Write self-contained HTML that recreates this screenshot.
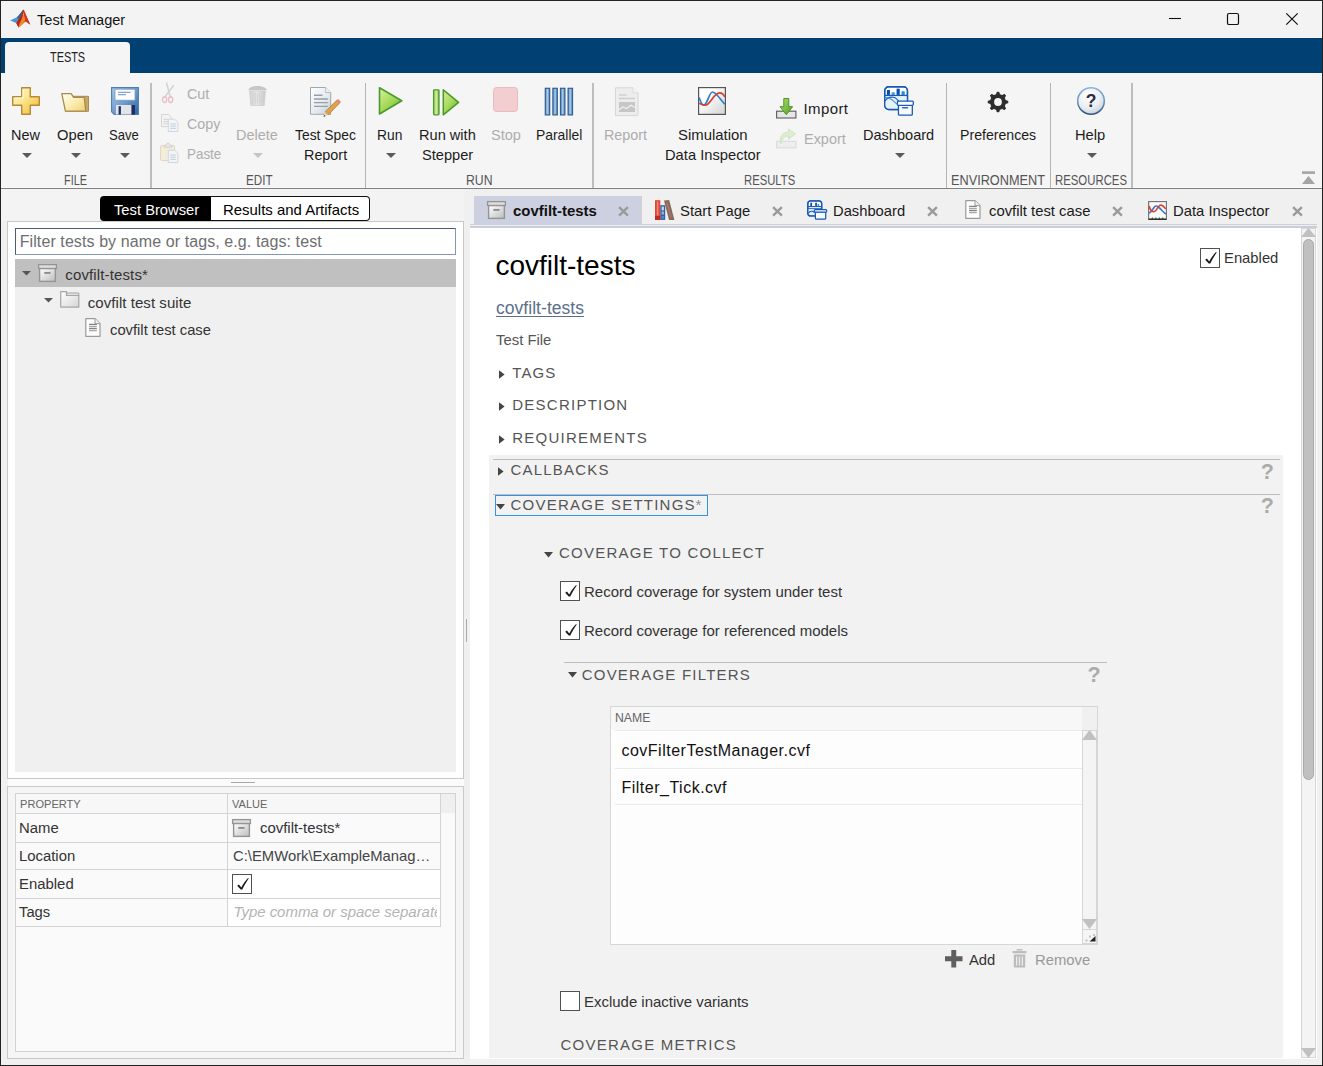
<!DOCTYPE html>
<html lang="en"><head><meta charset="utf-8"><title>Test Manager</title>
<style>
html,body{margin:0;padding:0;}
body{width:1323px;height:1066px;position:relative;overflow:hidden;background:#f0f0f0;font-family:"Liberation Sans",sans-serif;}
.t{position:absolute;white-space:pre;transform-origin:0 0;}
svg{display:block;overflow:visible;}
</style></head>
<body>
<div class="titlebar" style="position:absolute;left:0px;top:0px;width:1323px;height:38px;background:#f3f3f3;"></div>
<svg style="position:absolute;left:10px;top:9px;" width="21" height="20" viewBox="0 0 21 20"><path d="M13.400 .8L20.300 15.600L15.600 12.400L8.600 18.600L6.300 14L11 7z" fill="#c8321f"/><path d="M.2 11.500L6.800 8.300L8.200 10.600L6.300 14z" fill="#3f97dc"/><path d="M6.800 8.300C9.200 6.200 11.200 2.800 12.900 .9L13.400 1.200L11 7.600L8.200 10.600z" fill="#34618f"/><path d="M12.900 .9C13.300 .5 13.700 .6 14 1.300L13.600 4L12 9L9 15L8.600 18.600L6.300 14L8.200 10.600L11 7.600z" fill="#b3261c"/><path d="M13.500 2.500C13.900 5 14.600 7.800 15.400 10L14.600 12.700C13 14 11 17.200 8.600 18.600C8.700 16.500 9.500 14.500 11 12C12.200 9.500 13 6 13.500 2.500z" fill="#ef8a2a"/><path d="M14 1.300C15.400 3.500 17.500 10.500 20.300 15.600C18.400 14.400 16.800 12.700 15.600 12.400C15.200 12.300 14.900 12.400 14.600 12.700L15.400 10C14.600 7.800 13.900 5 13.500 2.500z" fill="#cf3a24"/><path d="M13.450 3.600l.5 2.100-.8 0z" fill="#ffd23a"/></svg>
<span class="t" style="left:37.40px;top:12.00px;font-size:15.2px;line-height:15.2px;color:#141414;transform:scaleX(0.9587);">Test Manager</span>
<svg style="position:absolute;left:1160px;top:5px;" width="150" height="28" viewBox="0 0 150 28"><path d="M9 13.5h12" stroke="#111" stroke-width="1.1" fill="none"/><rect x="67.5" y="8.5" width="11" height="11" rx="1.6" fill="none" stroke="#111" stroke-width="1.2"/><path d="M126.3 8.3l11.4 11.4M137.7 8.3l-11.4 11.4" stroke="#111" stroke-width="1.2" fill="none"/></svg>
<div class="tabbar" style="position:absolute;left:0px;top:38px;width:1323px;height:35px;background:#004073;"></div>
<div style="position:absolute;left:5px;top:42px;width:125px;height:31px;background:#f5f5f5;border-radius:4px 4px 0 0;"></div>
<span class="t" style="left:50.00px;top:50.00px;font-size:14px;line-height:14px;color:#222;transform:scaleX(0.7783);">TESTS</span>
<div class="toolstrip" style="position:absolute;left:0px;top:73px;width:1323px;height:115px;background:#f5f5f5;"></div>
<div style="position:absolute;left:0px;top:187px;width:1323px;height:1px;background:#fafafa;"></div>
<div style="position:absolute;left:0px;top:188px;width:1323px;height:1px;background:#808080;"></div>
<div style="position:absolute;left:150px;top:83px;width:2px;height:105px;background:#bdbdbd;"></div>
<div style="position:absolute;left:365px;top:83px;width:1px;height:105px;background:#b4b4b4;"></div>
<div style="position:absolute;left:592px;top:83px;width:2px;height:105px;background:#bdbdbd;"></div>
<div style="position:absolute;left:946px;top:83px;width:1px;height:105px;background:#b4b4b4;"></div>
<div style="position:absolute;left:1050px;top:83px;width:1px;height:105px;background:#b4b4b4;"></div>
<div style="position:absolute;left:1131px;top:83px;width:2px;height:105px;background:#bdbdbd;"></div>
<svg style="position:absolute;left:12px;top:87px;" width="28" height="28" viewBox="0 0 28 28"><defs><linearGradient id="g1" x1="0" y1="0" x2="1" y2="1"><stop offset="0" stop-color="#fffbe2"/><stop offset=".45" stop-color="#fbe58c"/><stop offset="1" stop-color="#eeb42c"/></linearGradient></defs><path d="M9.7 .7h8.6v9h9v8.6h-9v9H9.700v-9h-9V9.700h9z" fill="url(#g1)" stroke="#b98a34" stroke-width="1.4" stroke-linejoin="round"/><path d="M11 2.200v8.800h-8.800" fill="none" stroke="#fffef0" stroke-width="1.1" opacity=".9"/></svg>
<span class="t" style="left:11.40px;top:127.00px;font-size:15px;line-height:15px;color:#1c1c1c;transform:scaleX(0.9635);">New</span>
<svg style="position:absolute;left:22.0px;top:153px;" width="10" height="5" viewBox="0 0 10 5"><path d="M0 0h10l-5.0 5z" fill="#5a5a5a"/></svg>
<svg style="position:absolute;left:61px;top:92px;" width="29" height="20" viewBox="0 0 29 20"><defs><linearGradient id="g2" x1="0" y1="0" x2="1" y2="1"><stop offset="0" stop-color="#fffef4"/><stop offset=".5" stop-color="#fbeeb4"/><stop offset="1" stop-color="#efd071"/></linearGradient></defs><path d="M12 4.300h15.500v15H5z" fill="#c9a666" stroke="#a88a55" stroke-width="1"/><path d="M.8 1.600h9.400l2.400 3.800h10.600l1.600 13.800H4.400z" fill="url(#g2)" stroke="#a98b52" stroke-width="1.3" stroke-linejoin="round"/></svg>
<span class="t" style="left:56.70px;top:127.00px;font-size:15px;line-height:15px;color:#1c1c1c;transform:scaleX(0.9809);">Open</span>
<svg style="position:absolute;left:71.0px;top:153px;" width="10" height="5" viewBox="0 0 10 5"><path d="M0 0h10l-5.0 5z" fill="#5a5a5a"/></svg>
<svg style="position:absolute;left:111px;top:87px;" width="28" height="28" viewBox="0 0 28 28"><defs><linearGradient id="g3" x1="0" y1="0" x2="1" y2="1"><stop offset="0" stop-color="#a9c9ea"/><stop offset=".5" stop-color="#6f9fd0"/><stop offset="1" stop-color="#2f5f96"/></linearGradient></defs><path d="M.6 .6h26.800v26.800H3.200L.6 24.800z" fill="url(#g3)" stroke="#4d7db4" stroke-width="1.1"/><rect x="4" y="2.200" width="20" height="11" fill="#fdfdfe" stroke="#7c9cc2" stroke-width=".8"/><path d="M7 5.300h12.500M7 7.700h8" stroke="#86a5c9" stroke-width="1.2"/><rect x="4.600" y="18" width="19.400" height="9.600" fill="#1c2c66"/><rect x="4.600" y="18" width="15.800" height="9.600" fill="#e3e4e8"/><rect x="7.600" y="19.200" width="2.300" height="8.400" fill="#1c2c66"/></svg>
<span class="t" style="left:109.00px;top:127.00px;font-size:15px;line-height:15px;color:#1c1c1c;transform:scaleX(0.8743);">Save</span>
<svg style="position:absolute;left:119.7px;top:153px;" width="10" height="5" viewBox="0 0 10 5"><path d="M0 0h10l-5.0 5z" fill="#5a5a5a"/></svg>
<svg style="opacity:0.72;position:absolute;left:161px;top:83px;" width="14" height="21" viewBox="0 0 14 21"><path d="M5.600 .3L9.400 14M12.400 2.800L3.800 14" stroke="#c6c6c6" stroke-width="1.500" fill="none" stroke-linecap="round"/><ellipse cx="3.600" cy="16.600" rx="2.100" ry="2.900" fill="none" stroke="#e7a9b2" stroke-width="1.400"/><ellipse cx="9.600" cy="16.600" rx="2.100" ry="2.900" fill="none" stroke="#e7a9b2" stroke-width="1.400"/></svg>
<span class="t" style="left:186.70px;top:86.00px;font-size:15px;line-height:15px;color:#adadad;transform:scaleX(0.9571);">Cut</span>
<svg style="opacity:0.72;position:absolute;left:161px;top:114px;" width="18" height="18" viewBox="0 0 18 18"><path d="M0.5 0.5h6.8l3.2 3.2v9.0h-10z" fill="#f3f3f4" stroke="#c8c8cc" stroke-width="1"/><path d="M2.5 5.300000000000001h6" stroke="#c8c8cc" stroke-width="1"/><path d="M2.5 7.500000000000001h6" stroke="#c8c8cc" stroke-width="1"/><path d="M2.5 9.700000000000001h6" stroke="#c8c8cc" stroke-width="1"/><path d="M7.3 5.2h6.3999999999999995l3.2 3.2v9.100000000000001h-9.6z" fill="#f2f5f9" stroke="#c2cbd8" stroke-width="1"/><path d="M9.3 10.0h5.6" stroke="#b4c0d0" stroke-width="1"/><path d="M9.3 12.2h5.6" stroke="#b4c0d0" stroke-width="1"/><path d="M9.3 14.399999999999999h5.6" stroke="#b4c0d0" stroke-width="1"/></svg>
<span class="t" style="left:186.70px;top:116.00px;font-size:15px;line-height:15px;color:#adadad;transform:scaleX(0.9543);">Copy</span>
<svg style="opacity:0.72;position:absolute;left:160px;top:143px;" width="19" height="20" viewBox="0 0 19 20"><rect x=".6" y="2.600" width="14" height="15" rx="1.200" fill="#f3ead0" stroke="#d9ceb2" stroke-width="1"/><path d="M4 4.200V2.200h2L7 .5h2l1 1.700h2v2z" fill="#e2e2e2" stroke="#c4c4c4" stroke-width=".9"/><path d="M8.3 7.2h6.3999999999999995l3.2 3.2v9.100000000000001h-9.6z" fill="#f2f5f9" stroke="#c2cbd8" stroke-width="1"/><path d="M10.3 12.0h5.6" stroke="#b4c0d0" stroke-width="1"/><path d="M10.3 14.2h5.6" stroke="#b4c0d0" stroke-width="1"/><path d="M10.3 16.4h5.6" stroke="#b4c0d0" stroke-width="1"/></svg>
<span class="t" style="left:186.70px;top:146.00px;font-size:15px;line-height:15px;color:#adadad;transform:scaleX(0.8932);">Paste</span>
<svg style="position:absolute;left:247px;top:85px;" width="21" height="21" viewBox="0 0 21 21"><defs><linearGradient id="g4" x1="0" y1="0" x2="1" y2="0"><stop offset="0" stop-color="#d2d2d2"/><stop offset=".5" stop-color="#e6e6e6"/><stop offset="1" stop-color="#c8c8c8"/></linearGradient></defs><path d="M1.200 5.200C1.800 2.800 5 1 10.500 1S19.200 2.800 19.800 5.200z" fill="#c6c6c6"/><path d="M2.600 6h15.800l-1.200 14.500H3.800z" fill="url(#g4)" stroke="#cfcfcf" stroke-width=".8"/><path d="M6 8v10.500M8.300 8v10.500M10.500 8v10.500M12.700 8v10.500M15 8v10.500" stroke="#d0d0d0" stroke-width=".9"/></svg>
<span class="t" style="left:236.30px;top:127.00px;font-size:15px;line-height:15px;color:#adadad;transform:scaleX(0.9608);">Delete</span>
<svg style="position:absolute;left:253.0px;top:153px;" width="10" height="5" viewBox="0 0 10 5"><path d="M0 0h10l-5.0 5z" fill="#c4c4c4"/></svg>
<svg style="position:absolute;left:309px;top:86px;" width="32" height="32" viewBox="0 0 32 32"><defs><linearGradient id="g5" x1="0" y1="0" x2="1" y2="1"><stop offset="0" stop-color="#fdfefe"/><stop offset=".6" stop-color="#e3eaf1"/><stop offset="1" stop-color="#bccad8"/></linearGradient></defs><path d="M1.500 1.500h15.200l5 5v21.800H1.500z" fill="url(#g5)" stroke="#a3a7ab" stroke-width="1"/><path d="M16.700 1.500v5h5" fill="#f4f6f8" stroke="#b0b4b8" stroke-width=".9"/><path d="M5 9.200h8.500M5 13h13.800M5 16.600h13.800M5 20.400h13.800" stroke="#9a9da1" stroke-width="1.400"/><path d="M27.600 14.300l3 3L19 29l-3-3z" fill="#dfa24c" stroke="#b57a2e" stroke-width=".7"/><path d="M27.600 14.300l1.500-1.400 3 3-1.500 1.400z" fill="#e87f8c"/><path d="M16 26l3 3-4.600 1.600z" fill="#e9d3a6"/><path d="M15.300 29l1.300 1.200-2.200.6z" fill="#333"/></svg>
<span class="t" style="left:294.50px;top:127.00px;font-size:15px;line-height:15px;color:#1c1c1c;transform:scaleX(0.9241);">Test Spec</span>
<span class="t" style="left:303.60px;top:147.00px;font-size:15px;line-height:15px;color:#1c1c1c;transform:scaleX(0.9578);">Report</span>
<svg style="position:absolute;left:378px;top:86px;" width="26" height="30" viewBox="0 0 26 30"><defs><linearGradient id="g6" x1="0" y1="0" x2=".8" y2="1"><stop offset="0" stop-color="#d6f09a"/><stop offset=".55" stop-color="#a6da5a"/><stop offset="1" stop-color="#6cb637"/></linearGradient></defs><path d="M1.500 1.800L23.800 14.800L1.500 28z" fill="url(#g6)" stroke="#4c9a2e" stroke-width="1.600" stroke-linejoin="round"/></svg>
<span class="t" style="left:376.70px;top:127.00px;font-size:15px;line-height:15px;color:#1c1c1c;transform:scaleX(0.9200);">Run</span>
<svg style="position:absolute;left:385.8px;top:153px;" width="10" height="5" viewBox="0 0 10 5"><path d="M0 0h10l-5.0 5z" fill="#5a5a5a"/></svg>
<svg style="position:absolute;left:432px;top:88px;" width="29" height="28" viewBox="0 0 29 28"><defs><linearGradient id="g7" x1="0" y1="0" x2=".8" y2="1"><stop offset="0" stop-color="#d6f09a"/><stop offset=".55" stop-color="#a6da5a"/><stop offset="1" stop-color="#6cb637"/></linearGradient><linearGradient id="g8" x1="0" y1="0" x2="1" y2="0"><stop offset="0" stop-color="#8fcc4c"/><stop offset=".5" stop-color="#d4ef9c"/><stop offset="1" stop-color="#7dbf3f"/></linearGradient></defs><rect x="1.600" y="1.800" width="5.400" height="25" rx=".8" fill="url(#g8)" stroke="#4c9a2e" stroke-width="1.300"/><path d="M11.300 1.800L26.600 14.300L11.300 26.800z" fill="url(#g7)" stroke="#4c9a2e" stroke-width="1.500" stroke-linejoin="round"/></svg>
<span class="t" style="left:419.00px;top:127.00px;font-size:15px;line-height:15px;color:#1c1c1c;transform:scaleX(0.9726);">Run with</span>
<span class="t" style="left:421.70px;top:147.00px;font-size:15px;line-height:15px;color:#1c1c1c;transform:scaleX(0.9752);">Stepper</span>
<svg style="position:absolute;left:493px;top:87px;" width="25" height="25" viewBox="0 0 25 25"><rect x=".5" y=".5" width="24" height="24" rx="3" fill="#f3ced1" stroke="#ecb9be" stroke-width="1"/></svg>
<span class="t" style="left:491.00px;top:127.00px;font-size:15px;line-height:15px;color:#adadad;transform:scaleX(0.9709);">Stop</span>
<svg style="position:absolute;left:544px;top:87px;" width="30" height="29" viewBox="0 0 30 29"><defs><linearGradient id="g9" x1="0" y1="0" x2="1" y2="0"><stop offset="0" stop-color="#5a8cc4"/><stop offset=".5" stop-color="#a9cbea"/><stop offset="1" stop-color="#4f83bd"/></linearGradient></defs><rect x="1.3" y="1.300" width="4.400" height="26.600" fill="url(#g9)" stroke="#34608f" stroke-width="1.200"/><rect x="8.9" y="1.300" width="4.400" height="26.600" fill="url(#g9)" stroke="#34608f" stroke-width="1.200"/><rect x="16.5" y="1.300" width="4.400" height="26.600" fill="url(#g9)" stroke="#34608f" stroke-width="1.200"/><rect x="24.1" y="1.300" width="4.400" height="26.600" fill="url(#g9)" stroke="#34608f" stroke-width="1.200"/></svg>
<span class="t" style="left:536.00px;top:127.00px;font-size:15px;line-height:15px;color:#1c1c1c;transform:scaleX(0.9260);">Parallel</span>
<svg style="position:absolute;left:614px;top:87px;" width="26" height="30" viewBox="0 0 26 30"><path d="M1.500 .8h17.500l5 5v22.800H1.500z" fill="#ededed" stroke="#d6d6d6" stroke-width="1"/><path d="M19 .8v5h5" fill="#f7f7f7" stroke="#d9d9d9" stroke-width=".9"/><path d="M5 8h7.500M5 11.600h16" stroke="#cfcfcf" stroke-width="1.500"/><rect x="5" y="15" width="16" height="10" fill="#c6c6c6"/><path d="M5 22.500l4-2.600 3.600 1.700 4.400-3.300 4 2.200" fill="none" stroke="#efefef" stroke-width="1.300"/></svg>
<span class="t" style="left:604.00px;top:127.00px;font-size:15px;line-height:15px;color:#adadad;transform:scaleX(0.9556);">Report</span>
<svg style="position:absolute;left:698px;top:87px;" width="28" height="28" viewBox="0 0 28 28"><defs><linearGradient id="g10" x1=".3" y1=".3" x2="1" y2="1"><stop offset="0" stop-color="#fff"/><stop offset="1" stop-color="#d2d2d2"/></linearGradient></defs><rect x=".6" y=".6" width="26.800" height="26.800" fill="url(#g10)" stroke="#555" stroke-width="1.200"/><path d="M1.200 10.500C2.500 15 4 18 5.800 18C9.500 18 11 5 14.500 5C18 5 22 12 26.800 17.200" fill="none" stroke="#2f7fd0" stroke-width="1.700"/><path d="M1.200 16C3 18 5.500 18.500 8 18C12.500 17 16 5.800 21.600 5.800C24 5.800 26 8 26.800 10" fill="none" stroke="#d8402c" stroke-width="1.700"/></svg>
<span class="t" style="left:678.00px;top:127.00px;font-size:15px;line-height:15px;color:#1c1c1c;transform:scaleX(0.9929);">Simulation</span>
<span class="t" style="left:665.30px;top:147.00px;font-size:15px;line-height:15px;color:#1c1c1c;transform:scaleX(0.9805);">Data Inspector</span>
<svg style="position:absolute;left:776px;top:98px;" width="21" height="21" viewBox="0 0 21 21"><defs><linearGradient id="g11" x1="0" y1="0" x2="1" y2="1"><stop offset="0" stop-color="#b6e070"/><stop offset="1" stop-color="#4c9e22"/></linearGradient></defs><rect x=".6" y="13.200" width="19.300" height="6.800" fill="#e6e6e6" stroke="#5c5c5c" stroke-width="1.100"/><path d="M7.800 .5h5v8.200h3.800l-6.300 8-6.300-8h3.800z" fill="url(#g11)" stroke="#4a9427" stroke-width="1" stroke-linejoin="round"/></svg>
<span class="t" style="left:803.50px;top:101.00px;font-size:15px;line-height:15px;color:#1c1c1c;letter-spacing:0.400px;">Import</span>
<svg style="opacity:0.72;position:absolute;left:776px;top:128px;" width="21" height="21" viewBox="0 0 21 21"><rect x=".6" y="13.400" width="19.300" height="6.400" fill="#ececec" stroke="#d2d2d2" stroke-width="1.100"/><path d="M12.500 .8l7 5.200-7 5.200V8C8.500 8 6 10.500 5 16C2.500 9.500 6.500 4.200 12.500 4z" fill="#d3ebc4" stroke="#c3e0b0" stroke-width="1" stroke-linejoin="round"/></svg>
<span class="t" style="left:803.50px;top:131.00px;font-size:15px;line-height:15px;color:#adadad;transform:scaleX(0.9631);">Export</span>
<svg style="position:absolute;left:884px;top:85.7px;" width="30" height="30" viewBox="0 0 30.300 30.300"><rect x=".7" y=".7" width="23" height="23" rx="4.200" fill="#fff" stroke="#1b59b3" stroke-width="1.400"/><path d="M.8 9.600h22.800V19.400a4.200 4.200 0 0 1-4.200 4.200H5a4.200 4.200 0 0 1-4.200-4.200z" fill="#e3f2fb"/><rect x="2.900" y="4" width="3.100" height="5" fill="#0d4daa"/><rect x="7.700" y="6.400" width="3.100" height="2.600" fill="#3f93e2"/><rect x="12.700" y="2.700" width="3.200" height="6.300" fill="#0d4daa"/><rect x="17.700" y="5.300" width="3.200" height="3.700" fill="#1f8fe2"/><path d="M.7 9.500h23" stroke="#1b59b3" stroke-width="1.300"/><path d="M.9 15.200C3 12.200 6.500 10.800 9.500 11.400S14 14 15.500 16.500" fill="none" stroke="#1b59b3" stroke-width="1.200"/><path d="M.9 11.300C3.500 11.800 6 12.200 8 13.800L14.500 19.500" fill="none" stroke="#3f8fdc" stroke-width="1.100"/><rect x=".7" y=".7" width="23" height="23" rx="4.200" fill="none" stroke="#1b59b3" stroke-width="1.400"/><rect x="14.600" y="19" width="14" height="10.500" rx="1" fill="#f7fbfe" stroke="#1b59b3" stroke-width="1.300"/><rect x="13.600" y="15.300" width="16" height="4.200" rx="1" fill="#fff" stroke="#1b59b3" stroke-width="1.300"/><path d="M18.800 22h5" stroke="#2a6fc4" stroke-width="1.500" stroke-linecap="round"/></svg>
<span class="t" style="left:863.00px;top:127.00px;font-size:15px;line-height:15px;color:#1c1c1c;transform:scaleX(0.9700);">Dashboard</span>
<svg style="position:absolute;left:894.7px;top:153px;" width="10" height="5" viewBox="0 0 10 5"><path d="M0 0h10l-5.0 5z" fill="#5a5a5a"/></svg>
<svg style="position:absolute;left:987px;top:91px;" width="22" height="22" viewBox="0 0 22 22"><path d="M10.22 1.33 L11.78 1.33 L12.36 3.62 L15.25 4.82 L17.29 3.61 L18.39 4.71 L17.18 6.75 L18.38 9.64 L20.67 10.22 L20.67 11.78 L18.38 12.36 L17.18 15.25 L18.39 17.29 L17.29 18.39 L15.25 17.18 L12.36 18.38 L11.78 20.67 L10.22 20.67 L9.64 18.38 L6.75 17.18 L4.71 18.39 L3.61 17.29 L4.82 15.25 L3.62 12.36 L1.33 11.78 L1.33 10.22 L3.62 9.64 L4.82 6.75 L3.61 4.71 L4.71 3.61 L6.75 4.82 L9.64 3.62z" fill="#2e2e2e" stroke="#2e2e2e" stroke-width="1.200" stroke-linejoin="round"/><circle cx="11" cy="11" r="3.900" fill="#f5f5f5"/></svg>
<span class="t" style="left:960.30px;top:127.00px;font-size:15px;line-height:15px;color:#1c1c1c;transform:scaleX(0.9419);">Preferences</span>
<svg style="position:absolute;left:1077px;top:87px;" width="29" height="29" viewBox="0 0 29 29"><defs><radialGradient id="g12" cx=".4" cy=".3" r=".8"><stop offset="0" stop-color="#fff"/><stop offset=".6" stop-color="#e9edf1"/><stop offset="1" stop-color="#bcc6d0"/></radialGradient><linearGradient id="g13" x1="0" y1="0" x2="0" y2="1"><stop offset="0" stop-color="#8ab4e2"/><stop offset=".5" stop-color="#6a94c4"/><stop offset="1" stop-color="#34557a"/></linearGradient></defs><circle cx="14" cy="14" r="13.300" fill="url(#g12)" stroke="url(#g13)" stroke-width="1.500"/><text x="14" y="20.200" text-anchor="middle" font-family="Liberation Sans, sans-serif" font-weight="bold" font-size="17.500" fill="#2c2c48">?</text></svg>
<span class="t" style="left:1075.20px;top:127.00px;font-size:15px;line-height:15px;color:#1c1c1c;transform:scaleX(0.9806);">Help</span>
<svg style="position:absolute;left:1087.0px;top:153px;" width="10" height="5" viewBox="0 0 10 5"><path d="M0 0h10l-5.0 5z" fill="#5a5a5a"/></svg>
<span class="t" style="left:64.40px;top:173.00px;font-size:14.2px;line-height:14.2px;color:#555;transform:scaleX(0.7700);">FILE</span>
<span class="t" style="left:245.50px;top:173.00px;font-size:14.2px;line-height:14.2px;color:#555;transform:scaleX(0.8204);">EDIT</span>
<span class="t" style="left:466.20px;top:173.00px;font-size:14.2px;line-height:14.2px;color:#555;transform:scaleX(0.8636);">RUN</span>
<span class="t" style="left:744.20px;top:173.00px;font-size:14.2px;line-height:14.2px;color:#555;transform:scaleX(0.7950);">RESULTS</span>
<span class="t" style="left:951.20px;top:173.00px;font-size:14.2px;line-height:14.2px;color:#555;transform:scaleX(0.8961);">ENVIRONMENT</span>
<span class="t" style="left:1055.20px;top:173.00px;font-size:14.2px;line-height:14.2px;color:#555;transform:scaleX(0.8011);">RESOURCES</span>
<svg style="position:absolute;left:1302px;top:171px;" width="13" height="14" viewBox="0 0 13 14"><path d="M0 .3h13v2.600h-13z" fill="#a4a4a4"/><path d="M6.500 5l6.500 8h-13z" fill="#a4a4a4"/></svg>
<div style="position:absolute;left:1px;top:189px;width:469px;height:876px;background:#f0f0f0;"></div>
<div style="position:absolute;left:1px;top:189px;width:463px;height:32px;background:#f3f3f3;"></div>
<div style="position:absolute;left:7px;top:221px;width:457px;height:558px;background:#fff;border:1px solid #c9c9c9;box-sizing:border-box;"></div>
<div style="position:absolute;left:100px;top:196px;width:111px;height:25px;background:#000;border-radius:4px 0 0 4px;"></div>
<div style="position:absolute;left:211px;top:196px;width:159px;height:25px;background:#fff;border:1px solid #111;border-left:none;border-radius:0 4px 4px 0;box-sizing:border-box;"></div>
<span class="t" style="left:113.60px;top:202.00px;font-size:15px;line-height:15px;color:#fff;transform:scaleX(0.9827);">Test Browser</span>
<span class="t" style="left:223.10px;top:202.00px;font-size:15px;line-height:15px;color:#000;transform:scaleX(0.9956);">Results and Artifacts</span>
<div style="position:absolute;left:15px;top:228px;width:441px;height:27px;background:#fff;border:1px solid;border-color:#4f5b70 #8596b6 #8596b6 #4f5b70;box-sizing:border-box;"></div>
<span class="t" style="left:19.70px;top:234.00px;font-size:16px;line-height:16px;color:#6e6e6e;letter-spacing:0.093px;">Filter tests by name or tags, e.g. tags: test</span>
<div style="position:absolute;left:15px;top:259px;width:441px;height:513px;background:#f0f0f0;"></div>
<div style="position:absolute;left:15px;top:259px;width:441px;height:28px;background:#c0c0c0;"></div>
<svg style="position:absolute;left:21.8px;top:271px;" width="9" height="4.6" viewBox="0 0 9 4.6"><path d="M0 0h9l-4.5 4.6z" fill="#555"/></svg>
<svg style="position:absolute;left:38px;top:264px;" width="19" height="18" viewBox="0 0 19 18"><defs><linearGradient id="g14" x1="0" y1="0" x2="1" y2="1"><stop offset="0" stop-color="#fff"/><stop offset="1" stop-color="#bdbdbd"/></linearGradient></defs><rect x="1.600" y="4.400" width="15.800" height="13" fill="url(#g14)" stroke="#949494" stroke-width="1.400"/><rect x=".6" y=".6" width="17.800" height="3.900" fill="#dcdcdc" stroke="#949494" stroke-width="1.300"/><rect x="6.300" y="8" width="6.200" height="1.800" fill="#8a8a8a"/></svg>
<span class="t" style="left:65.30px;top:267.00px;font-size:15px;line-height:15px;color:#333;letter-spacing:0.131px;">covfilt-tests*</span>
<svg style="position:absolute;left:44.3px;top:298px;" width="9" height="4.6" viewBox="0 0 9 4.6"><path d="M0 0h9l-4.5 4.6z" fill="#555"/></svg>
<svg style="position:absolute;left:59.5px;top:291px;" width="20" height="17" viewBox="0 0 20 17"><defs><linearGradient id="g15" x1="0" y1="0" x2="1" y2="1"><stop offset="0" stop-color="#fff"/><stop offset="1" stop-color="#d6d6d6"/></linearGradient></defs><path d="M6.500 2h12.300v3H6.500z" fill="#e2e2e2" stroke="#a6a6a6" stroke-width="1"/><path d="M.7 .7h5.800v3.800h12.300v11.600H.7z" fill="url(#g15)" stroke="#a6a6a6" stroke-width="1.200" stroke-linejoin="round"/></svg>
<span class="t" style="left:87.80px;top:295.00px;font-size:15px;line-height:15px;color:#333;letter-spacing:0.053px;">covfilt test suite</span>
<svg style="position:absolute;left:85px;top:318px;" width="16" height="19" viewBox="0 0 16 19"><path d="M.8 .7h9.200l5 5v12.600H.8z" fill="#fff" stroke="#9a9a9a" stroke-width="1.200" stroke-linejoin="round"/><path d="M10 .7v5h5" fill="#f2f2f2" stroke="#9a9a9a" stroke-width="1"/><path d="M4 6.300h7.800M4 10.500h7.800" stroke="#858585" stroke-width="1.300"/><path d="M4 8.400h7.800M4 12.700h7.800" stroke="#a8a8a8" stroke-width="1.300"/></svg>
<span class="t" style="left:110.30px;top:322.00px;font-size:15px;line-height:15px;color:#333;transform:scaleX(0.9844);">covfilt test case</span>
<div style="position:absolute;left:8px;top:779px;width:456px;height:7px;background:#fbfbfb;"></div>
<div style="position:absolute;left:231px;top:782px;width:24px;height:1px;background:#a8a8a8;"></div>
<div style="position:absolute;left:466px;top:619px;width:1px;height:23px;background:#ababab;"></div>
<div style="position:absolute;left:7px;top:786px;width:457px;height:273px;background:#f5f5f5;border:1px solid #c9c9c9;box-sizing:border-box;"></div>
<div style="position:absolute;left:15px;top:793px;width:441px;height:259px;background:#fafafa;border:1px solid #d2d2d2;box-sizing:border-box;"></div>
<div style="position:absolute;left:16px;top:794px;width:424px;height:19px;background:#f7f7f7;"></div>
<div style="position:absolute;left:440px;top:794px;width:15px;height:19px;background:#efefef;"></div>
<div style="position:absolute;left:228px;top:870px;width:212px;height:56px;background:#fff;"></div>
<div style="position:absolute;left:16px;top:813px;width:425px;height:1px;background:#d4d4d4;"></div>
<div style="position:absolute;left:16px;top:842px;width:425px;height:1px;background:#d4d4d4;"></div>
<div style="position:absolute;left:16px;top:869px;width:425px;height:1px;background:#d4d4d4;"></div>
<div style="position:absolute;left:16px;top:898px;width:425px;height:1px;background:#d4d4d4;"></div>
<div style="position:absolute;left:16px;top:926px;width:425px;height:1px;background:#d4d4d4;"></div>
<div style="position:absolute;left:227px;top:794px;width:1px;height:133px;background:#d4d4d4;"></div>
<div style="position:absolute;left:440px;top:794px;width:1px;height:133px;background:#d4d4d4;"></div>
<span class="t" style="left:19.60px;top:799.00px;font-size:11.5px;line-height:11.5px;color:#666;transform:scaleX(0.9635);">PROPERTY</span>
<span class="t" style="left:232.20px;top:799.00px;font-size:11.5px;line-height:11.5px;color:#666;transform:scaleX(0.9593);">VALUE</span>
<span class="t" style="left:19.40px;top:820.00px;font-size:15.5px;line-height:15.5px;color:#333;transform:scaleX(0.9588);">Name</span>
<span class="t" style="left:19.40px;top:848.00px;font-size:15.5px;line-height:15.5px;color:#333;transform:scaleX(0.9590);">Location</span>
<span class="t" style="left:19.40px;top:876.00px;font-size:15.5px;line-height:15.5px;color:#333;transform:scaleX(0.9613);">Enabled</span>
<span class="t" style="left:19.40px;top:904.00px;font-size:15.5px;line-height:15.5px;color:#333;transform:scaleX(0.9541);">Tags</span>
<svg style="position:absolute;left:232px;top:819px;" width="19" height="18" viewBox="0 0 19 18"><defs><linearGradient id="g16" x1="0" y1="0" x2="1" y2="1"><stop offset="0" stop-color="#fff"/><stop offset="1" stop-color="#bdbdbd"/></linearGradient></defs><rect x="1.600" y="4.400" width="15.800" height="13" fill="url(#g16)" stroke="#949494" stroke-width="1.400"/><rect x=".6" y=".6" width="17.800" height="3.900" fill="#dcdcdc" stroke="#949494" stroke-width="1.300"/><rect x="6.300" y="8" width="6.200" height="1.800" fill="#8a8a8a"/></svg>
<span class="t" style="left:259.90px;top:820.00px;font-size:15px;line-height:15px;color:#333;transform:scaleX(0.9938);">covfilt-tests*</span>
<span class="t" style="left:232.50px;top:848.00px;font-size:15px;line-height:15px;color:#444;transform:scaleX(0.9880);">C:\EMWork\ExampleManag…</span>
<svg style="position:absolute;left:232px;top:874px;" width="20" height="20" viewBox="0 0 20 20"><rect x=".5" y=".5" width="19" height="19" fill="#fff" stroke="#505050" stroke-width="1"/><path d="M5.2 11.8L6.9 10.5L9.3 13.4C11.2 9.6 13.6 6.3 16.1 4L16.7 4.5C14.3 8 12 12 10.3 15.6L8.7 15.6z" fill="#1a1a1a"/></svg>
<div style="position:absolute;left:229px;top:900px;width:208px;height:26px;overflow:hidden;"><span class="t" style="left:4.40px;top:4.00px;font-size:15px;line-height:15px;color:#b4b4b4;letter-spacing:-0.030px;font-style:italic;white-space:nowrap;">Type comma or space separated</span></div>
<div class="doc" style="position:absolute;left:470px;top:228px;width:847px;height:831px;background:#fff;"></div>
<div style="position:absolute;left:474px;top:196px;width:167px;height:28px;background:#cdd0e0;"></div>
<div style="position:absolute;left:641px;top:196px;width:1px;height:28px;background:#cfcfcf;"></div>
<div style="position:absolute;left:470px;top:224px;width:847px;height:1px;background:#d0d0d0;"></div>
<div style="position:absolute;left:470px;top:225px;width:847px;height:1px;background:#efefef;"></div>
<div style="position:absolute;left:470px;top:226px;width:847px;height:2px;background:#c9ccdd;"></div>
<svg style="position:absolute;left:487px;top:201px;" width="19" height="18" viewBox="0 0 19 18"><defs><linearGradient id="g17" x1="0" y1="0" x2="1" y2="1"><stop offset="0" stop-color="#fff"/><stop offset="1" stop-color="#bdbdbd"/></linearGradient></defs><rect x="1.600" y="4.400" width="15.800" height="13" fill="url(#g17)" stroke="#949494" stroke-width="1.400"/><rect x=".6" y=".6" width="17.800" height="3.900" fill="#dcdcdc" stroke="#949494" stroke-width="1.300"/><rect x="6.300" y="8" width="6.200" height="1.800" fill="#8a8a8a"/></svg>
<span class="t" style="left:512.60px;top:203.00px;font-size:15px;line-height:15px;color:#111;font-weight:bold;transform:scaleX(0.9964);">covfilt-tests</span>
<svg style="position:absolute;left:617.9px;top:206.4px;" width="11" height="11" viewBox="0 0 11 11"><path d="M1.100 1.100l8.800 8.500M9.900 1.100l-8.800 8.500" stroke="#9a9a9a" stroke-width="2.400" fill="none"/></svg>
<svg style="position:absolute;left:654px;top:200px;" width="21" height="20" viewBox="0 0 21 20"><rect x="1" y=".2" width="5.300" height="19.700" fill="#dd4434"/><rect x="2.800" y="1.500" width="1.600" height="14" fill="#f08a78"/><rect x="1" y="16" width="5.300" height="3.900" fill="#c4281c"/><rect x="6.300" y="5.200" width="4.900" height="14.700" fill="#3d5c96"/><rect x="7.600" y="6.600" width="2.300" height="3.800" fill="#c0dcf8"/><rect x="7.600" y="11.500" width="2.300" height="3" fill="#8cbcec"/><rect x="7.600" y="16" width="2.300" height="2.600" fill="#4c8ce0"/><path d="M10 .4l5.200-.4L20.400 19.900h-5.400z" fill="#866c56"/><path d="M12.200 2.500l1.500-.1 4 15-1.500.1z" fill="#b0787c" opacity=".8"/></svg>
<span class="t" style="left:680.00px;top:203.00px;font-size:15px;line-height:15px;color:#1a1a1a;transform:scaleX(0.9915);">Start Page</span>
<svg style="position:absolute;left:772.1px;top:206.4px;" width="11" height="11" viewBox="0 0 11 11"><path d="M1.100 1.100l8.800 8.500M9.900 1.100l-8.800 8.500" stroke="#9a9a9a" stroke-width="2.400" fill="none"/></svg>
<svg style="position:absolute;left:807px;top:200px;" width="20" height="20" viewBox="0 0 20 20"><rect x=".8" y=".8" width="13.900" height="15.100" rx="3" fill="#fff" stroke="#1757b3" stroke-width="1.250"/><path d="M1.500 9h13v4.500a2 2 0 0 1-2 2h-9a2 2 0 0 1-2-2z" fill="#e3f2fb"/><rect x="3.300" y="2.700" width="1.700" height="3.300" fill="#0d4daa"/><rect x="8.200" y="2.700" width="1.700" height="3.300" fill="#0d4daa"/><rect x="10.600" y="4" width="1.600" height="2" fill="#1f9be8"/><path d="M.8 6.600h13.900" stroke="#1757b3" stroke-width="1.100"/><path d="M.8 8.600h13.900" stroke="#2a6fc4" stroke-width="1"/><path d="M1.500 13C3 10.800 5.500 10.600 7.500 12.500" fill="none" stroke="#1757b3" stroke-width="1.100"/><rect x=".8" y=".8" width="13.900" height="15.100" rx="3" fill="none" stroke="#1757b3" stroke-width="1.250"/><rect x="8.400" y="12" width="10.300" height="7.200" rx="1" fill="#f4f9fe" stroke="#1757b3" stroke-width="1.200"/><rect x="7.300" y="9.600" width="12.400" height="2.600" rx="1" fill="#fff" stroke="#1757b3" stroke-width="1.200"/></svg>
<span class="t" style="left:833.20px;top:203.00px;font-size:15px;line-height:15px;color:#1a1a1a;transform:scaleX(0.9823);">Dashboard</span>
<svg style="position:absolute;left:927.1px;top:206.4px;" width="11" height="11" viewBox="0 0 11 11"><path d="M1.100 1.100l8.800 8.500M9.900 1.100l-8.800 8.500" stroke="#9a9a9a" stroke-width="2.400" fill="none"/></svg>
<svg style="position:absolute;left:965px;top:200px;" width="16" height="19" viewBox="0 0 16 19"><path d="M.8 .7h9.200l5 5v12.600H.8z" fill="#fff" stroke="#9a9a9a" stroke-width="1.200" stroke-linejoin="round"/><path d="M10 .7v5h5" fill="#f2f2f2" stroke="#9a9a9a" stroke-width="1"/><path d="M4 6.300h7.800M4 10.500h7.800" stroke="#858585" stroke-width="1.300"/><path d="M4 8.400h7.800M4 12.700h7.800" stroke="#a8a8a8" stroke-width="1.300"/></svg>
<span class="t" style="left:988.80px;top:203.00px;font-size:15px;line-height:15px;color:#1a1a1a;transform:scaleX(0.9893);">covfilt test case</span>
<svg style="position:absolute;left:1111.9px;top:206.4px;" width="11" height="11" viewBox="0 0 11 11"><path d="M1.100 1.100l8.800 8.500M9.900 1.100l-8.800 8.500" stroke="#9a9a9a" stroke-width="2.400" fill="none"/></svg>
<svg style="position:absolute;left:1148px;top:201px;" width="19" height="19" viewBox="0 0 19 19"><rect x=".6" y=".6" width="17.800" height="17.800" fill="#fdfdfd" stroke="#777" stroke-width="1.200"/><path d="M.6 18.200h17.800" stroke="#2a2a2a" stroke-width="1.400"/><path d="M4.300 16.500v1.500M7.800 16.500v1.500M11.300 16.500v1.500M14.800 16.500v1.500" stroke="#333" stroke-width="1"/><path d="M1 12C3 11.500 4.500 9 6 6.500S9 5 11 6.500S15 11 17.800 13" fill="none" stroke="#3f74c8" stroke-width="1.600"/><path d="M1.200 5C2 9 4 11 6.500 10.500S9.500 5 12 4.200S16 5.500 17.800 8" fill="none" stroke="#dc4030" stroke-width="1.600"/></svg>
<span class="t" style="left:1173.30px;top:203.00px;font-size:15px;line-height:15px;color:#1a1a1a;transform:scaleX(0.9877);">Data Inspector</span>
<svg style="position:absolute;left:1292.1000000000001px;top:206.4px;" width="11" height="11" viewBox="0 0 11 11"><path d="M1.100 1.100l8.800 8.500M9.900 1.100l-8.800 8.500" stroke="#9a9a9a" stroke-width="2.400" fill="none"/></svg>
<div style="position:absolute;left:1301px;top:228px;width:15px;height:830px;background:#f4f4f4;border:1px solid #d6d6d6;box-sizing:border-box;"></div>
<svg style="position:absolute;left:1301px;top:228px;" width="15" height="9" viewBox="0 0 15 9"><path d="M0 9h15L7.5 0z" fill="#c0c0c0"/></svg>
<svg style="position:absolute;left:1301px;top:1048px;" width="15" height="10" viewBox="0 0 15 10"><path d="M0 0h15L7.5 10z" fill="#c0c0c0"/></svg>
<div style="position:absolute;left:1303px;top:238.5px;width:11px;height:541.5px;background:#c0c0c0;border:1px solid #aaa;box-sizing:border-box;border-radius:5.5px;"></div>
<span class="t" style="left:495.40px;top:252.00px;font-size:28px;line-height:28px;color:#000;">covfilt-tests</span>
<svg style="position:absolute;left:1200px;top:248px;" width="20" height="20" viewBox="0 0 20 20"><rect x=".5" y=".5" width="19" height="19" fill="#fff" stroke="#505050" stroke-width="1"/><path d="M5.2 11.8L6.9 10.5L9.3 13.4C11.2 9.6 13.6 6.3 16.1 4L16.7 4.5C14.3 8 12 12 10.3 15.6L8.7 15.6z" fill="#1a1a1a"/></svg>
<span class="t" style="left:1224.00px;top:250.00px;font-size:15px;line-height:15px;color:#333;transform:scaleX(0.9873);">Enabled</span>
<span class="t" style="left:496.00px;top:300.00px;font-size:17.5px;line-height:17.5px;color:#5b6f8a;letter-spacing:0.042px;">covfilt-tests</span>
<div style="position:absolute;left:496px;top:316px;width:88px;height:1px;background:#5b6f8a;"></div>
<span class="t" style="left:496.00px;top:332.00px;font-size:15px;line-height:15px;color:#555;transform:scaleX(0.9910);">Test File</span>
<svg style="position:absolute;left:499px;top:369.8px;" width="6" height="9" viewBox="0 0 6 9"><path d="M0 .3l5.6 4.2l-5.6 4.2z" fill="#444"/></svg>
<span class="t" style="left:512.30px;top:365.00px;font-size:15px;line-height:15px;color:#555;letter-spacing:1.100px;">TAGS</span>
<svg style="position:absolute;left:499px;top:402.2px;" width="6" height="9" viewBox="0 0 6 9"><path d="M0 .3l5.6 4.2l-5.6 4.2z" fill="#444"/></svg>
<span class="t" style="left:512.30px;top:397.00px;font-size:15px;line-height:15px;color:#555;letter-spacing:1.240px;">DESCRIPTION</span>
<svg style="position:absolute;left:499px;top:435.2px;" width="6" height="9" viewBox="0 0 6 9"><path d="M0 .3l5.6 4.2l-5.6 4.2z" fill="#444"/></svg>
<span class="t" style="left:512.30px;top:430.00px;font-size:15px;line-height:15px;color:#555;letter-spacing:1.227px;">REQUIREMENTS</span>
<div class="sect" style="position:absolute;left:489px;top:455px;width:794px;height:603px;background:#f2f2f2;"></div>
<div style="position:absolute;left:493px;top:459px;width:787px;height:1px;background:#bdbdbd;"></div>
<div style="position:absolute;left:493px;top:494px;width:787px;height:1px;background:#bdbdbd;"></div>
<svg style="position:absolute;left:497.7px;top:467.0px;" width="6" height="9" viewBox="0 0 6 9"><path d="M0 .3l5.6 4.2l-5.6 4.2z" fill="#444"/></svg>
<span class="t" style="left:510.50px;top:462.00px;font-size:15px;line-height:15px;color:#555;letter-spacing:1.200px;">CALLBACKS</span>
<div style="position:absolute;left:495px;top:495px;width:213px;height:21px;border:1px solid #3292ee;box-sizing:border-box;"></div>
<svg style="position:absolute;left:496px;top:503.5px;" width="9" height="5.5" viewBox="0 0 9 5.5"><path d="M0 0h9l-4.5 5.5z" fill="#444"/></svg>
<span class="t" style="left:510.50px;top:497.00px;font-size:15px;line-height:15px;color:#555;letter-spacing:1.244px;">COVERAGE SETTINGS</span>
<span class="t" style="left:695.60px;top:497.00px;font-size:15px;line-height:15px;color:#8c8c8c;">*</span>
<span class="t" style="left:1260.80px;top:462.00px;font-size:21.5px;line-height:21.5px;color:#ababab;font-weight:bold;">?</span>
<span class="t" style="left:1260.80px;top:496.00px;font-size:21.5px;line-height:21.5px;color:#ababab;font-weight:bold;">?</span>
<span class="t" style="left:1087.60px;top:665.00px;font-size:21.5px;line-height:21.5px;color:#ababab;font-weight:bold;">?</span>
<svg style="position:absolute;left:544.2px;top:552px;" width="9" height="5.5" viewBox="0 0 9 5.5"><path d="M0 0h9l-4.5 5.5z" fill="#444"/></svg>
<span class="t" style="left:559.00px;top:545.00px;font-size:15px;line-height:15px;color:#555;letter-spacing:1.233px;">COVERAGE TO COLLECT</span>
<svg style="position:absolute;left:560px;top:581px;" width="20" height="20" viewBox="0 0 20 20"><rect x=".5" y=".5" width="19" height="19" fill="#fff" stroke="#505050" stroke-width="1"/><path d="M5.2 11.8L6.9 10.5L9.3 13.4C11.2 9.6 13.6 6.3 16.1 4L16.7 4.5C14.3 8 12 12 10.3 15.6L8.7 15.6z" fill="#1a1a1a"/></svg>
<span class="t" style="left:584.00px;top:584.00px;font-size:15px;line-height:15px;color:#333;transform:scaleX(0.9985);">Record coverage for system under test</span>
<svg style="position:absolute;left:560px;top:620px;" width="20" height="20" viewBox="0 0 20 20"><rect x=".5" y=".5" width="19" height="19" fill="#fff" stroke="#505050" stroke-width="1"/><path d="M5.2 11.8L6.9 10.5L9.3 13.4C11.2 9.6 13.6 6.3 16.1 4L16.7 4.5C14.3 8 12 12 10.3 15.6L8.7 15.6z" fill="#1a1a1a"/></svg>
<span class="t" style="left:584.00px;top:623.00px;font-size:15px;line-height:15px;color:#333;transform:scaleX(0.9989);">Record coverage for referenced models</span>
<div style="position:absolute;left:564px;top:662px;width:543px;height:1px;background:#bdbdbd;"></div>
<svg style="position:absolute;left:567.6px;top:672px;" width="9" height="5.5" viewBox="0 0 9 5.5"><path d="M0 0h9l-4.5 5.5z" fill="#444"/></svg>
<span class="t" style="left:581.70px;top:667.00px;font-size:15px;line-height:15px;color:#555;letter-spacing:1.227px;">COVERAGE FILTERS</span>
<div style="position:absolute;left:610px;top:706px;width:488px;height:239px;background:#fdfdfd;border:1px solid #d6d6d6;box-sizing:border-box;"></div>
<div style="position:absolute;left:611px;top:707px;width:471px;height:23px;background:#f7f7f7;"></div>
<div style="position:absolute;left:1082px;top:707px;width:15px;height:23px;background:#f0f0f0;"></div>
<div style="position:absolute;left:615px;top:730px;width:467px;height:1px;background:#ebebeb;"></div>
<div style="position:absolute;left:615px;top:768px;width:467px;height:1px;background:#ebebeb;"></div>
<div style="position:absolute;left:615px;top:804px;width:467px;height:1px;background:#ebebeb;"></div>
<span class="t" style="left:615.40px;top:712.00px;font-size:12.5px;line-height:12.5px;color:#666;transform:scaleX(0.9806);">NAME</span>
<span class="t" style="left:621.40px;top:743.00px;font-size:16px;line-height:16px;color:#111;letter-spacing:0.504px;">covFilterTestManager.cvf</span>
<span class="t" style="left:621.40px;top:780.00px;font-size:16px;line-height:16px;color:#111;letter-spacing:0.507px;">Filter_Tick.cvf</span>
<div style="position:absolute;left:1082px;top:730px;width:15px;height:200px;background:#f4f4f4;border:1px solid #d6d6d6;box-sizing:border-box;"></div>
<svg style="position:absolute;left:1082px;top:730px;" width="15" height="10" viewBox="0 0 15 10"><path d="M0 10h15L7.5 0z" fill="#c0c0c0"/></svg>
<svg style="position:absolute;left:1082px;top:919px;" width="15" height="10" viewBox="0 0 15 10"><path d="M0 0h15L7.5 10z" fill="#c0c0c0"/></svg>
<div style="position:absolute;left:1082px;top:929px;width:15px;height:15px;background:#f5f5f5;border:1px solid #d6d6d6;box-sizing:border-box;"></div>
<svg style="position:absolute;left:1082px;top:930px;" width="15" height="13" viewBox="0 0 15 13"><path d="M7.500 11.500l6-5.500v5.500z" fill="#222"/><path d="M7 6.500h2M11 5h2M3.500 10.500h2" stroke="#c4c4c4" stroke-width="2"/></svg>
<svg style="position:absolute;left:945.2px;top:950.3px;" width="17.5" height="17.5" viewBox="0 0 17.5 17.5"><path d="M6.3 0h4.900v6.300h6.300v4.900h-6.300v6.300h-4.900v-6.300H0v-4.900h6.300z" fill="#5f5f5f"/></svg>
<span class="t" style="left:969.00px;top:952.00px;font-size:15px;line-height:15px;color:#333;transform:scaleX(0.9850);">Add</span>
<svg style="position:absolute;left:1012px;top:949px;" width="15" height="19" viewBox="0 0 15 19"><path d="M4.600 0h5.800v1.500H4.600zM.6 2h13.800v2.200H.6z" fill="#bcbcbc"/><path d="M1.800 5.500h11.400v13H1.800z" fill="#bcbcbc"/><path d="M4.600 7.500v9M7.500 7.500v9M10.400 7.500v9" stroke="#eee" stroke-width="1.200"/></svg>
<span class="t" style="left:1035.20px;top:952.00px;font-size:15px;line-height:15px;color:#999;transform:scaleX(0.9893);">Remove</span>
<svg style="position:absolute;left:560px;top:991px;" width="20" height="20" viewBox="0 0 20 20"><rect x=".5" y=".5" width="19" height="19" fill="#fff" stroke="#505050" stroke-width="1"/></svg>
<span class="t" style="left:584.00px;top:994.00px;font-size:15px;line-height:15px;color:#333;transform:scaleX(0.9970);">Exclude inactive variants</span>
<span class="t" style="left:560.40px;top:1037.00px;font-size:15px;line-height:15px;color:#555;letter-spacing:1.253px;">COVERAGE METRICS</span>
<div style="position:absolute;left:1px;top:1059px;width:1321px;height:6px;background:#f0f0f0;"></div>
<div style="position:absolute;left:0px;top:0px;width:1323px;height:1px;background:#222;"></div>
<div style="position:absolute;left:0px;top:1065px;width:1323px;height:1px;background:#222;"></div>
<div style="position:absolute;left:0px;top:0px;width:1px;height:1066px;background:#222;"></div>
<div style="position:absolute;left:1322px;top:0px;width:1px;height:1066px;background:#222;"></div>
</body></html>
